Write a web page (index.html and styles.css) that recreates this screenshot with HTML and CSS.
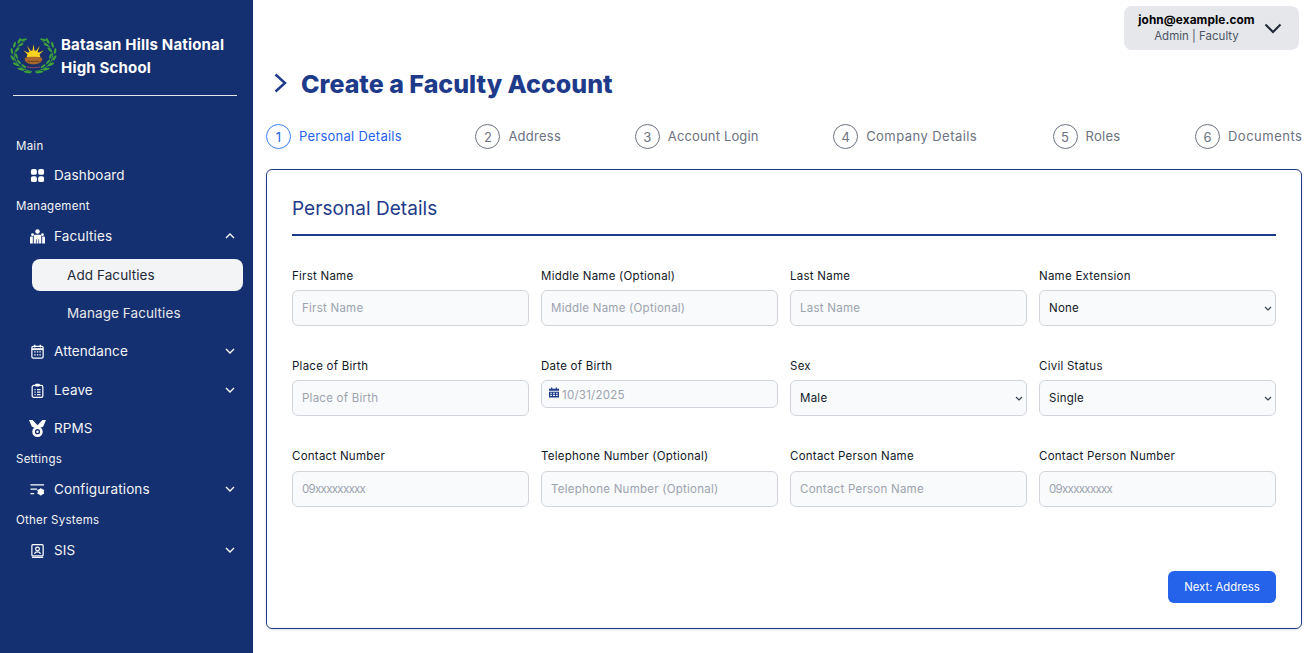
FILE: index.html
```html
<!DOCTYPE html>
<html lang="en">
<head>
<meta charset="utf-8">
<title>Create a Faculty Account</title>
<link rel="stylesheet" href="styles.css">
</head>
<body>
<aside class="sidebar">
  <div class="brand">
    <svg class="brand-logo" viewBox="0 0 48 38" aria-hidden="true">
      <defs>
        <g id="laurel" fill="#3da33a">
          <path d="M15 3C11 5 6 10 4.500 16c-1 6 3 12 9 15.500 3 1.500 6 2.500 9 3" fill="none" stroke="#3da33a" stroke-width=".9"/>
          <ellipse cx="14" cy="1.800" rx="3.400" ry="1.100" transform="rotate(-12 14 1.800)"/>
          <ellipse cx="9.500" cy="3" rx="3.200" ry="1.200" transform="rotate(-60 9.500 3)"/>
          <ellipse cx="11" cy="7" rx="3" ry="1.100" transform="rotate(-25 11 7)"/>
          <ellipse cx="4.500" cy="7" rx="3.200" ry="1.200" transform="rotate(-75 4.500 7)"/>
          <ellipse cx="7.500" cy="12" rx="3" ry="1.100" transform="rotate(-50 7.500 12)"/>
          <ellipse cx="1.800" cy="13.500" rx="3.200" ry="1.200" transform="rotate(80 1.800 13.500)"/>
          <ellipse cx="6.500" cy="18.500" rx="3" ry="1.100" transform="rotate(70 6.500 18.500)"/>
          <ellipse cx="2.500" cy="20.500" rx="3.200" ry="1.200" transform="rotate(55 2.500 20.500)"/>
          <ellipse cx="9" cy="24.500" rx="3" ry="1.100" transform="rotate(50 9 24.500)"/>
          <ellipse cx="6" cy="27" rx="3.400" ry="1.200" transform="rotate(30 6 27)"/>
          <ellipse cx="14" cy="29" rx="3" ry="1.100" transform="rotate(35 14 29)"/>
          <ellipse cx="11" cy="32" rx="3.600" ry="1.200" transform="rotate(15 11 32)"/>
          <ellipse cx="18" cy="35" rx="4" ry="1.100" transform="rotate(8 18 35)"/>
        </g>
      </defs>
      <circle cx="24" cy="19" r="12" fill="#1c2f66"/>
      <path d="M24 6.500 25 13h-2zM17.500 8 21.500 13.500 20 14.500zM30.500 8 26.500 13.500 28 14.500zM13.500 12.500 19 15.500 18 17zM34.500 12.500 29 15.500 30 17z" fill="#ffd21f"/>
      <path d="M17 19.500a7 7 0 0 1 14 0z" fill="#ffd21f"/>
      <path d="M15 20.500c3-1.700 15-1.700 18 0 .5 3.700-3 6.500-9 6.500s-9.500-2.800-9-6.500z" fill="#a8672c"/>
      <path d="M18 24h12" stroke="#6f4420" stroke-width="1"/>
      <path d="M17 29.500c4 1.500 10 1.500 14 0" fill="none" stroke="#8d4b6a" stroke-width="1"/>
      <use href="#laurel"/>
      <use href="#laurel" transform="matrix(-1 0 0 1 48 0)"/>
    </svg>
    <div class="brand-name">Batasan Hills National High School</div>
  </div>
  <nav class="nav">
    <div class="nav-label nav-label-first">Main</div>
    <a class="nav-item">
      <svg class="nav-icon" viewBox="0 0 16 16"><rect x="1" y="1" width="6.300" height="6.300" rx="2" fill="#fff"/><rect x="8.700" y="1" width="6.300" height="6.300" rx="2" fill="#fff"/><rect x="1" y="8.700" width="6.300" height="6.300" rx="2" fill="#fff"/><rect x="8.700" y="8.700" width="6.300" height="6.300" rx="2" fill="#fff"/></svg>
      <span>Dashboard</span>
    </a>
    <div class="nav-label">Management</div>
    <a class="nav-item">
      <svg class="nav-icon" viewBox="0 0 16 16" fill="#fff"><circle cx="8" cy="2.600" r="2.400"/><circle cx="2.700" cy="6" r="1.500"/><circle cx="13.300" cy="6" r="1.500"/><path d="M5.300 6h5.400c.8 0 1.300.6 1.300 1.300V15.500H9.700V11H9v4.500H7V11h-.7v4.500H4V7.300C4 6.600 4.500 6 5.300 6z"/><path d="M0 9.300C0 8.500.6 8 1.300 8h1.700v7.500H0zM13 8h1.700c.7 0 1.300.5 1.300 1.300v6.200h-3z"/></svg>
      <span>Faculties</span>
      <svg class="nav-chevron" viewBox="0 0 10 6"><path d="M1 5l4-4 4 4"/></svg>
    </a>
    <div class="subnav">
      <a class="subnav-item is-active">Add Faculties</a>
      <a class="subnav-item">Manage Faculties</a>
    </div>
    <a class="nav-item nav-item-after-sub">
      <svg class="nav-icon" viewBox="0 0 16 16" fill="none" stroke="#fff"><rect x="2" y="2.500" width="12" height="12.500" rx="1.500" stroke-width="1.300"/><path d="M2 5.500h12" stroke-width="2"/><path d="M5 .8v3M11 .8v3" stroke-width="1.500"/><path d="M4.500 8.500h1.500M7.300 8.500h1.500M10 8.500h1.500M4.500 11.500h1.500M7.300 11.500h1.500M10 11.500h1.500" stroke-width="1.300"/></svg>
      <span>Attendance</span>
      <svg class="nav-chevron" viewBox="0 0 10 6"><path d="M1 1l4 4 4-4"/></svg>
    </a>
    <a class="nav-item">
      <svg class="nav-icon" viewBox="0 0 16 16" fill="none" stroke="#fff" stroke-width="1.300"><rect x="2.300" y="2.500" width="11.400" height="12.800" rx="1.800"/><rect x="5.500" y=".8" width="5" height="2.900" rx="1" fill="#fff" stroke="none"/><path d="M4.800 7h1.200M7.500 7h3.700M4.800 9.700h1.200M7.500 9.700h3.700M4.800 12.400h1.200M7.500 12.400h3.700"/></svg>
      <span>Leave</span>
      <svg class="nav-chevron" viewBox="0 0 10 6"><path d="M1 1l4 4 4-4"/></svg>
    </a>
    <a class="nav-item">
      <svg class="nav-icon nav-icon-large" viewBox="0 0 16 16"><path d="M0 0h3.400l4.600 5 4.600-5H16l-2.600 6-2.400 1.200H5L2.600 6z" fill="#fff"/><circle cx="8" cy="11" r="3.700" fill="none" stroke="#fff" stroke-width="2.500"/><circle cx="8" cy="11" r="1.200" fill="#fff"/></svg>
      <span>RPMS</span>
    </a>
    <div class="nav-label">Settings</div>
    <a class="nav-item">
      <svg class="nav-icon" viewBox="0 0 16 16"><path d="M.5 3h14.500M.5 7.500h7M.5 12.500h4" stroke="#fff" stroke-width="1.300" fill="none"/><circle cx="11.500" cy="10.500" r="2.300" fill="none" stroke="#fff" stroke-width="2"/><path d="M11.500 6.700v7.600M8 8.700l7 3.600M8 12.300l7-3.600" stroke="#fff" stroke-width="1.300"/></svg>
      <span>Configurations</span>
      <svg class="nav-chevron" viewBox="0 0 10 6"><path d="M1 1l4 4 4-4"/></svg>
    </a>
    <div class="nav-label">Other Systems</div>
    <a class="nav-item">
      <svg class="nav-icon" viewBox="0 0 16 16" fill="none" stroke="#fff" stroke-width="1.300"><rect x="2" y="1.800" width="12" height="12" rx="1"/><circle cx="8" cy="6.500" r="2"/><path d="M4.800 11.500c.6-1.500 1.700-2 3.200-2s2.600.5 3.200 2"/><path d="M2 15.300h12"/></svg>
      <span>SIS</span>
      <svg class="nav-chevron" viewBox="0 0 10 6"><path d="M1 1l4 4 4-4"/></svg>
    </a>
  </nav>
</aside>
<main class="main">
  <header class="topbar">
    <div class="user-pill">
      <div class="user-info">
        <div class="user-email">john@example.com</div>
        <div class="user-role">Admin | Faculty</div>
      </div>
      <svg class="user-chevron" viewBox="0 0 18 11"><path d="M1.500 1.500 9 9l7.500-7.500"/></svg>
    </div>
  </header>
  <div class="page-title-row">
    <svg class="title-chevron" viewBox="0 0 15 20"><path d="M2.500 1.500 12 10l-9.500 8.500"/></svg>
    <h1 class="page-title">Create a Faculty Account</h1>
  </div>
  <ol class="stepper">
    <li class="step step-personal is-current"><span class="step-num">1</span><span class="step-label">Personal Details</span></li>
    <li class="step step-address"><span class="step-num">2</span><span class="step-label">Address</span></li>
    <li class="step step-login"><span class="step-num">3</span><span class="step-label">Account Login</span></li>
    <li class="step step-company"><span class="step-num">4</span><span class="step-label">Company Details</span></li>
    <li class="step step-roles"><span class="step-num">5</span><span class="step-label">Roles</span></li>
    <li class="step step-documents"><span class="step-num">6</span><span class="step-label">Documents</span></li>
  </ol>
  <section class="card">
    <h2 class="card-title">Personal Details</h2>
    <form class="form-grid">
      <label class="field"><span class="field-label">First Name</span><input class="control" placeholder="First Name"></label>
      <label class="field"><span class="field-label">Middle Name (Optional)</span><input class="control" placeholder="Middle Name (Optional)"></label>
      <label class="field"><span class="field-label">Last Name</span><input class="control" placeholder="Last Name"></label>
      <label class="field"><span class="field-label">Name Extension</span><select class="control control-select"><option>None</option></select></label>
      <label class="field"><span class="field-label">Place of Birth</span><input class="control" placeholder="Place of Birth"></label>
      <label class="field"><span class="field-label">Date of Birth</span>
        <span class="date-wrap">
          <svg class="date-icon" viewBox="0 0 12 12"><path d="M2.500 0h1.500v1.500h4V0h1.500v1.500H12V4H0V1.500h2.500zM0 5h12v7H0zm1.500 1.200v1.300h2V6.200zm3.300 0v1.300h2.400V6.200zm3.700 0v1.300h2V6.200zM1.500 8.800v1.500h2V8.800zm3.300 0v1.500h2.400V8.800zm3.700 0v1.500h2V8.800z" fill-rule="evenodd"/></svg>
          <input class="control control-date" value="10/31/2025">
        </span>
      </label>
      <label class="field"><span class="field-label">Sex</span><select class="control control-select"><option>Male</option></select></label>
      <label class="field"><span class="field-label">Civil Status</span><select class="control control-select"><option>Single</option></select></label>
      <label class="field field-last-row"><span class="field-label">Contact Number</span><input class="control control-phone" placeholder="09xxxxxxxxx"></label>
      <label class="field field-last-row"><span class="field-label">Telephone Number (Optional)</span><input class="control" placeholder="Telephone Number (Optional)"></label>
      <label class="field field-last-row"><span class="field-label">Contact Person Name</span><input class="control" placeholder="Contact Person Name"></label>
      <label class="field field-last-row"><span class="field-label">Contact Person Number</span><input class="control control-phone" placeholder="09xxxxxxxxx"></label>
    </form>
    <div class="card-actions"><button class="btn-primary" type="button">Next: Address</button></div>
  </section>
</main>
</body>
</html>
```
FILE: styles.css
```css
* { box-sizing: border-box; }
html, body { height: 100%; }
body {
  margin: 0;
  display: flex;
  height: 653px;
  overflow: hidden;
  background: #fff;
  color: #111827;
  font-family: Inter, "Liberation Sans", sans-serif;
}
.sidebar {
  width: 253px;
  flex: none;
  background: #153070;
  color: #fff;
  padding: 32px 10px 0 10px;
}
.brand {
  display: flex;
  align-items: center;
  gap: 4px;
  height: 46px;
}
.brand-logo { width: 47px; height: 37px; flex: none; margin-top: 3px; }
.brand-name {
  width: 180px;
  padding-top: 2px;
  font-size: 15px;
  font-weight: 700;
  letter-spacing: .18px;
  line-height: 23px;
}
.nav {
  margin: 17px 0 0 3px;
  border-top: 1px solid #e5e7eb;
  width: 224px;
  padding-top: 40px;
}
.nav-label {
  height: 23px;
  padding-top: 1px;
  font-size: 11.500px;
  letter-spacing: .25px;
  line-height: 22px;
  margin-left: 3px;
  color: #f3f4f6;
}
.nav-label-first {
  height: 20px;
  padding-top: 0;
  line-height: 20px;
}
.nav-item {
  display: flex;
  align-items: center;
  width: 222px;
  height: 38px;
  padding-left: 17px;
  font-size: 13.500px;
  letter-spacing: .12px;
  color: #f3f4f6;
}
.nav-item-after-sub { margin: 3px 0 1px; }
.nav-icon { width: 15px; height: 15px; flex: none; margin-right: 9px; }
.nav-icon-large { width: 17px; height: 17px; margin: 0 8px 0 -1px; }
.nav-chevron {
  width: 10px;
  height: 6px;
  margin-left: auto;
  fill: none;
  stroke: #fff;
  stroke-width: 1.300;
}
.subnav {
  display: flex;
  flex-direction: column;
  gap: 6px;
  margin: 4px 0 0 19px;
  width: 211px;
}
.subnav-item {
  height: 32px;
  line-height: 32px;
  padding-left: 35px;
  border-radius: 8px;
  font-size: 13.500px;
  letter-spacing: .08px;
  color: #e5e7eb;
}
.subnav-item.is-active { background: #f3f4f6; color: #1f2937; }
.main {
  flex: 1;
  min-width: 0;
  display: flex;
  flex-direction: column;
  padding: 6px 12px 24px 13px;
}
.topbar { display: flex; justify-content: flex-end; padding-right: 3px; }
.user-pill {
  width: 175px;
  height: 44px;
  display: flex;
  align-items: center;
  padding: 0 17px 0 13px;
  background: #e5e7eb;
  border-radius: 8px;
}
.user-info { flex: 1; text-align: center; white-space: nowrap; }
.user-email { font-size: 11.800px; font-weight: 700; letter-spacing: .1px; line-height: 15px; color: #000; }
.user-role { font-size: 11.500px; line-height: 15px; margin-top: 1px; color: #4b5563; }
.user-chevron {
  width: 18px;
  height: 11px;
  margin-left: 8px;
  fill: none;
  stroke: #1f2937;
  stroke-width: 2;
}
.page-title-row {
  display: flex;
  align-items: center;
  gap: 13px;
  height: 34px;
  margin-top: 16px;
  padding-left: 7px;
}
.title-chevron {
  width: 15px;
  height: 20px;
  fill: none;
  stroke: #1e3a8a;
  stroke-width: 2.400;
}
.page-title {
  margin: 2px 0 0;
  font-size: 25px;
  font-weight: 800;
  color: #1e3a8a;
}
.stepper {
  display: flex;
  justify-content: space-between;
  list-style: none;
  margin: 24px 0 20px;
  padding: 0;
}
.step {
  display: flex;
  align-items: center;
  gap: 8px;
  height: 25px;
  font-size: 13px;
  color: #6b7280;
  white-space: nowrap;
}
.step-personal { width: 135px; }
.step-address { width: 85px; }
.step-login { width: 124px; }
.step-company { width: 145px; }
.step-roles { width: 68px; }
.step-documents { width: 107px; }
.step-label { margin-top: -2px; letter-spacing: .25px; }
.step-login .step-label { letter-spacing: .15px; }
.step-company .step-label { letter-spacing: .45px; }
.step-documents .step-label { letter-spacing: .5px; }
.step-num {
  flex: none;
  width: 25px;
  height: 25px;
  display: flex;
  align-items: center;
  justify-content: center;
  border: 1px solid #6b7280;
  border-radius: 50%;
  font-size: 13px;
}
.step.is-current { color: #2563eb; }
.step.is-current .step-num { border-color: #3b82f6; }
.card {
  flex: 1;
  display: flex;
  flex-direction: column;
  padding: 25px;
  border: 1px solid #1e3a8a;
  border-radius: 6px;
  box-shadow: 0 1px 3px rgba(0, 0, 0, .12);
}
.card-title {
  margin: 0;
  height: 41px;
  padding-bottom: 11px;
  border-bottom: 2px solid #1e3a8a;
  font-size: 19px;
  line-height: 28px;
  font-weight: 400;
  letter-spacing: .05px;
  color: #1e3a8a;
}
.form-grid {
  display: grid;
  grid-template-columns: repeat(4, 1fr);
  column-gap: 12px;
  row-gap: 32px;
  margin-top: 32px;
  align-items: start;
}
.field { display: block; }
.field-label {
  display: block;
  height: 22px;
  font-size: 11.500px;
  letter-spacing: .25px;
  line-height: 16px;
  color: #111827;
}
.field-last-row .field-label { height: 23px; }
.control {
  display: block;
  width: 100%;
  height: 36px;
  padding: 0 9px;
  border: 1px solid #d1d5db;
  border-radius: 6px;
  background: #f9fafb;
  font-family: inherit;
  font-size: 11.500px;
  letter-spacing: .25px;
  color: #111827;
}
.control::placeholder { color: #9ca3af; opacity: 1; }
.control-phone::placeholder { letter-spacing: -.7px; }
.control-select {
  appearance: none;
  background-image: url("data:image/svg+xml,%3Csvg xmlns='http://www.w3.org/2000/svg' viewBox='0 0 8 5'%3E%3Cpath d='M1 1l3 3 3-3' fill='none' stroke='%23374151' stroke-width='1.200'/%3E%3C/svg%3E");
  background-repeat: no-repeat;
  background-position: right 3px center;
  background-size: 8px 5px;
}
.date-wrap { display: block; position: relative; }
.control-date { height: 28px; padding: 2px 9px 0 20px; color: #9ca3af; }
.date-icon {
  position: absolute;
  left: 8px;
  top: 7px;
  width: 10px;
  height: 11px;
  fill: #1e3a8a;
}
.card-actions { margin-top: auto; display: flex; justify-content: flex-end; }
.btn-primary {
  width: 108px;
  height: 32px;
  border: 0;
  border-radius: 6px;
  background: #2563eb;
  color: #fff;
  font-family: inherit;
  font-size: 11.300px;
}
```
